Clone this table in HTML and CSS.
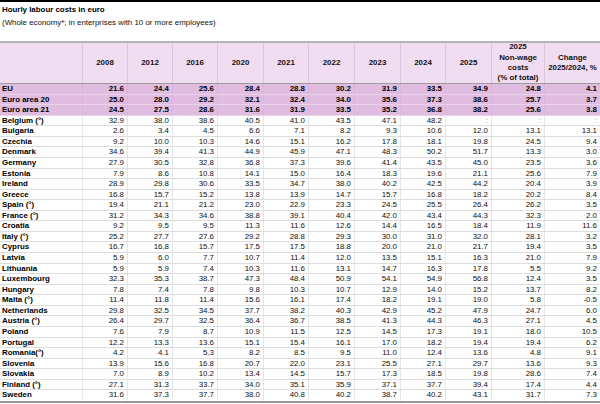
FILE: index.html
```html
<!DOCTYPE html>
<html lang="en">
<head>
<meta charset="utf-8">
<title>Hourly labour costs in euro</title>
<link rel="stylesheet" href="styles.css">
</head>
<body>
<div class="title">Hourly labour costs in euro</div>
<div class="subtitle">(Whole economy*; in enterprises with 10 or more employees)</div>
<div class="table">
  <div class="row head">
    <div class="cell"></div>
    <div class="cell">2008</div>
    <div class="cell">2012</div>
    <div class="cell">2016</div>
    <div class="cell">2020</div>
    <div class="cell">2021</div>
    <div class="cell">2022</div>
    <div class="cell">2023</div>
    <div class="cell">2024</div>
    <div class="cell">2025</div>
    <div class="cell">2025<br>Non-wage<br>costs<br>(% of total)</div>
    <div class="cell">Change<br>2025/2024, %</div>
  </div>
  <div class="row agg"><div class="cell name">EU</div><div class="cell">21.6</div><div class="cell">24.4</div><div class="cell">25.6</div><div class="cell">28.4</div><div class="cell">28.8</div><div class="cell">30.2</div><div class="cell">31.9</div><div class="cell">33.5</div><div class="cell">34.9</div><div class="cell">24.8</div><div class="cell">4.1</div></div>
  <div class="row agg"><div class="cell name">Euro area 20</div><div class="cell">25.0</div><div class="cell">28.0</div><div class="cell">29.2</div><div class="cell">32.1</div><div class="cell">32.4</div><div class="cell">34.0</div><div class="cell">35.6</div><div class="cell">37.3</div><div class="cell">38.6</div><div class="cell">25.7</div><div class="cell">3.7</div></div>
  <div class="row agg"><div class="cell name">Euro area 21</div><div class="cell">24.5</div><div class="cell">27.5</div><div class="cell">28.6</div><div class="cell">31.6</div><div class="cell">31.9</div><div class="cell">33.5</div><div class="cell">35.2</div><div class="cell">36.8</div><div class="cell">38.2</div><div class="cell">25.6</div><div class="cell">3.8</div></div>
  <div class="row"><div class="cell name">Belgium (°)</div><div class="cell">32.9</div><div class="cell">38.0</div><div class="cell">38.6</div><div class="cell">40.5</div><div class="cell">41.0</div><div class="cell">43.5</div><div class="cell">47.1</div><div class="cell">48.2</div><div class="cell na">:</div><div class="cell na">:</div><div class="cell na">:</div></div>
  <div class="row"><div class="cell name">Bulgaria</div><div class="cell">2.6</div><div class="cell">3.4</div><div class="cell">4.5</div><div class="cell">6.6</div><div class="cell">7.1</div><div class="cell">8.2</div><div class="cell">9.3</div><div class="cell">10.6</div><div class="cell">12.0</div><div class="cell">13.1</div><div class="cell">13.1</div></div>
  <div class="row"><div class="cell name">Czechia</div><div class="cell">9.2</div><div class="cell">10.0</div><div class="cell">10.3</div><div class="cell">14.6</div><div class="cell">15.1</div><div class="cell">16.2</div><div class="cell">17.8</div><div class="cell">18.1</div><div class="cell">19.8</div><div class="cell">24.5</div><div class="cell">9.4</div></div>
  <div class="row"><div class="cell name">Denmark</div><div class="cell">34.6</div><div class="cell">39.4</div><div class="cell">41.3</div><div class="cell">44.9</div><div class="cell">45.9</div><div class="cell">47.1</div><div class="cell">48.3</div><div class="cell">50.2</div><div class="cell">51.7</div><div class="cell">13.3</div><div class="cell">3.0</div></div>
  <div class="row"><div class="cell name">Germany</div><div class="cell">27.9</div><div class="cell">30.5</div><div class="cell">32.8</div><div class="cell">36.8</div><div class="cell">37.3</div><div class="cell">39.6</div><div class="cell">41.4</div><div class="cell">43.5</div><div class="cell">45.0</div><div class="cell">23.5</div><div class="cell">3.6</div></div>
  <div class="row"><div class="cell name">Estonia</div><div class="cell">7.9</div><div class="cell">8.6</div><div class="cell">10.8</div><div class="cell">14.1</div><div class="cell">15.0</div><div class="cell">16.4</div><div class="cell">18.3</div><div class="cell">19.6</div><div class="cell">21.1</div><div class="cell">25.6</div><div class="cell">7.9</div></div>
  <div class="row"><div class="cell name">Ireland</div><div class="cell">28.9</div><div class="cell">29.8</div><div class="cell">30.6</div><div class="cell">33.5</div><div class="cell">34.7</div><div class="cell">38.0</div><div class="cell">40.2</div><div class="cell">42.5</div><div class="cell">44.2</div><div class="cell">20.4</div><div class="cell">3.9</div></div>
  <div class="row"><div class="cell name">Greece</div><div class="cell">16.8</div><div class="cell">15.7</div><div class="cell">15.2</div><div class="cell">13.8</div><div class="cell">13.9</div><div class="cell">14.7</div><div class="cell">15.7</div><div class="cell">16.8</div><div class="cell">18.2</div><div class="cell">20.2</div><div class="cell">8.4</div></div>
  <div class="row"><div class="cell name">Spain (°)</div><div class="cell">19.4</div><div class="cell">21.1</div><div class="cell">21.2</div><div class="cell">23.0</div><div class="cell">22.9</div><div class="cell">23.3</div><div class="cell">24.5</div><div class="cell">25.5</div><div class="cell">26.4</div><div class="cell">26.2</div><div class="cell">3.5</div></div>
  <div class="row"><div class="cell name">France (°)</div><div class="cell">31.2</div><div class="cell">34.3</div><div class="cell">34.6</div><div class="cell">38.8</div><div class="cell">39.1</div><div class="cell">40.4</div><div class="cell">42.0</div><div class="cell">43.4</div><div class="cell">44.3</div><div class="cell">32.3</div><div class="cell">2.0</div></div>
  <div class="row"><div class="cell name">Croatia</div><div class="cell">9.2</div><div class="cell">9.5</div><div class="cell">9.5</div><div class="cell">11.3</div><div class="cell">11.6</div><div class="cell">12.6</div><div class="cell">14.4</div><div class="cell">16.5</div><div class="cell">18.4</div><div class="cell">11.9</div><div class="cell">11.6</div></div>
  <div class="row"><div class="cell name">Italy (°)</div><div class="cell">25.2</div><div class="cell">27.7</div><div class="cell">27.6</div><div class="cell">29.2</div><div class="cell">28.8</div><div class="cell">29.3</div><div class="cell">30.0</div><div class="cell">31.0</div><div class="cell">32.0</div><div class="cell">28.1</div><div class="cell">3.2</div></div>
  <div class="row"><div class="cell name">Cyprus</div><div class="cell">16.7</div><div class="cell">16.8</div><div class="cell">15.7</div><div class="cell">17.5</div><div class="cell">17.5</div><div class="cell">18.8</div><div class="cell">20.0</div><div class="cell">21.0</div><div class="cell">21.7</div><div class="cell">19.4</div><div class="cell">3.5</div></div>
  <div class="row"><div class="cell name">Latvia</div><div class="cell">5.9</div><div class="cell">6.0</div><div class="cell">7.7</div><div class="cell">10.7</div><div class="cell">11.4</div><div class="cell">12.0</div><div class="cell">13.5</div><div class="cell">15.1</div><div class="cell">16.3</div><div class="cell">21.0</div><div class="cell">7.9</div></div>
  <div class="row"><div class="cell name">Lithuania</div><div class="cell">5.9</div><div class="cell">5.9</div><div class="cell">7.4</div><div class="cell">10.3</div><div class="cell">11.6</div><div class="cell">13.1</div><div class="cell">14.7</div><div class="cell">16.3</div><div class="cell">17.8</div><div class="cell">5.5</div><div class="cell">9.2</div></div>
  <div class="row"><div class="cell name">Luxembourg</div><div class="cell">32.3</div><div class="cell">35.3</div><div class="cell">38.7</div><div class="cell">47.3</div><div class="cell">48.4</div><div class="cell">50.9</div><div class="cell">54.1</div><div class="cell">54.9</div><div class="cell">56.8</div><div class="cell">12.4</div><div class="cell">3.5</div></div>
  <div class="row"><div class="cell name">Hungary</div><div class="cell">7.8</div><div class="cell">7.4</div><div class="cell">7.8</div><div class="cell">9.8</div><div class="cell">10.3</div><div class="cell">10.7</div><div class="cell">12.9</div><div class="cell">14.0</div><div class="cell">15.2</div><div class="cell">13.7</div><div class="cell">8.2</div></div>
  <div class="row"><div class="cell name">Malta (°)</div><div class="cell">11.4</div><div class="cell">11.8</div><div class="cell">11.4</div><div class="cell">15.6</div><div class="cell">16.1</div><div class="cell">17.4</div><div class="cell">18.2</div><div class="cell">19.1</div><div class="cell">19.0</div><div class="cell">5.8</div><div class="cell">-0.5</div></div>
  <div class="row"><div class="cell name">Netherlands</div><div class="cell">29.8</div><div class="cell">32.5</div><div class="cell">34.5</div><div class="cell">37.7</div><div class="cell">38.2</div><div class="cell">40.3</div><div class="cell">42.9</div><div class="cell">45.2</div><div class="cell">47.9</div><div class="cell">24.7</div><div class="cell">6.0</div></div>
  <div class="row"><div class="cell name">Austria (°)</div><div class="cell">26.4</div><div class="cell">29.7</div><div class="cell">32.5</div><div class="cell">36.4</div><div class="cell">36.7</div><div class="cell">38.5</div><div class="cell">41.3</div><div class="cell">44.3</div><div class="cell">46.3</div><div class="cell">27.1</div><div class="cell">4.5</div></div>
  <div class="row"><div class="cell name">Poland</div><div class="cell">7.6</div><div class="cell">7.9</div><div class="cell">8.7</div><div class="cell">10.9</div><div class="cell">11.5</div><div class="cell">12.5</div><div class="cell">14.5</div><div class="cell">17.3</div><div class="cell">19.1</div><div class="cell">18.0</div><div class="cell">10.5</div></div>
  <div class="row"><div class="cell name">Portugal</div><div class="cell">12.2</div><div class="cell">13.3</div><div class="cell">13.6</div><div class="cell">15.1</div><div class="cell">15.4</div><div class="cell">16.1</div><div class="cell">17.0</div><div class="cell">18.2</div><div class="cell">19.4</div><div class="cell">19.4</div><div class="cell">6.2</div></div>
  <div class="row"><div class="cell name">Romania(°)</div><div class="cell">4.2</div><div class="cell">4.1</div><div class="cell">5.3</div><div class="cell">8.2</div><div class="cell">8.5</div><div class="cell">9.5</div><div class="cell">11.0</div><div class="cell">12.4</div><div class="cell">13.6</div><div class="cell">4.8</div><div class="cell">9.1</div></div>
  <div class="row"><div class="cell name">Slovenia</div><div class="cell">13.9</div><div class="cell">15.6</div><div class="cell">16.8</div><div class="cell">20.7</div><div class="cell">22.0</div><div class="cell">23.1</div><div class="cell">25.5</div><div class="cell">27.1</div><div class="cell">29.7</div><div class="cell">13.6</div><div class="cell">9.3</div></div>
  <div class="row"><div class="cell name">Slovakia</div><div class="cell">7.0</div><div class="cell">8.9</div><div class="cell">10.2</div><div class="cell">13.4</div><div class="cell">14.5</div><div class="cell">15.7</div><div class="cell">17.3</div><div class="cell">18.5</div><div class="cell">19.8</div><div class="cell">28.6</div><div class="cell">7.4</div></div>
  <div class="row"><div class="cell name">Finland (°)</div><div class="cell">27.1</div><div class="cell">31.3</div><div class="cell">33.7</div><div class="cell">34.0</div><div class="cell">35.1</div><div class="cell">35.9</div><div class="cell">37.1</div><div class="cell">37.7</div><div class="cell">39.4</div><div class="cell">17.4</div><div class="cell">4.4</div></div>
  <div class="row last"><div class="cell name">Sweden</div><div class="cell">31.6</div><div class="cell">37.3</div><div class="cell">37.7</div><div class="cell">38.0</div><div class="cell">40.8</div><div class="cell">40.2</div><div class="cell">38.7</div><div class="cell">40.2</div><div class="cell">43.1</div><div class="cell">31.7</div><div class="cell">7.3</div></div>
</div>
</body>
</html>
```

FILE: styles.css
```css
html, body {
  margin: 0;
  padding: 0;
  background: #ffffff;
}

body {
  width: 600px;
  height: 404px;
  overflow: hidden;
  box-sizing: border-box;
  border-top: 2px solid #000000;
  font-family: "Liberation Sans", Arial, sans-serif;
  font-size: 7.9px;
  color: #111111;
}

.title {
  font-weight: bold;
  line-height: 12px;
  padding: 2px 0 0 2px;
  color: #000000;
}

.subtitle {
  line-height: 12px;
  margin-top: 1px;
  padding-left: 2px;
  color: #111111;
}

.table {
  margin-top: 12px;
  border-bottom: 2px solid #9a9a9a;
}

.row {
  display: grid;
  grid-template-columns: 83px 45px 45px 45px 46px 45px 46px 46px 45px 46px 53px 55px;
  height: 10.57px;
  box-sizing: border-box;
  border-bottom: 1px solid #dddddd;
}

.row.last {
  border-bottom: none;
}

.cell {
  border-right: 1px solid #e6e6e6;
  text-align: right;
  padding-right: 3px;
  line-height: 9.8px;
  white-space: nowrap;
  overflow: hidden;
}

.cell:last-child {
  border-right: none;
}

.cell.name {
  text-align: left;
  padding-left: 2px;
  padding-right: 0;
  font-weight: bold;
  color: #000000;
}

.cell.na {
  color: #8a8a8a;
}

.row.head {
  height: 43px;
  border-top: 2px solid #b3b3b3;
  border-bottom: 1px solid #9e9e9e;
  background: #f1ddf1;
}

.row.head .cell {
  display: flex;
  align-items: center;
  justify-content: center;
  text-align: center;
  padding: 0;
  line-height: 10.4px;
  font-weight: bold;
  border-right-color: #dcc6dc;
  color: #111111;
}

.row.agg {
  background: #e0bde0;
  border-bottom-color: #ebd2eb;
}

.row.agg .cell {
  font-weight: bold;
  border-right-color: #d9b6d9;
  color: #000000;
}
```
